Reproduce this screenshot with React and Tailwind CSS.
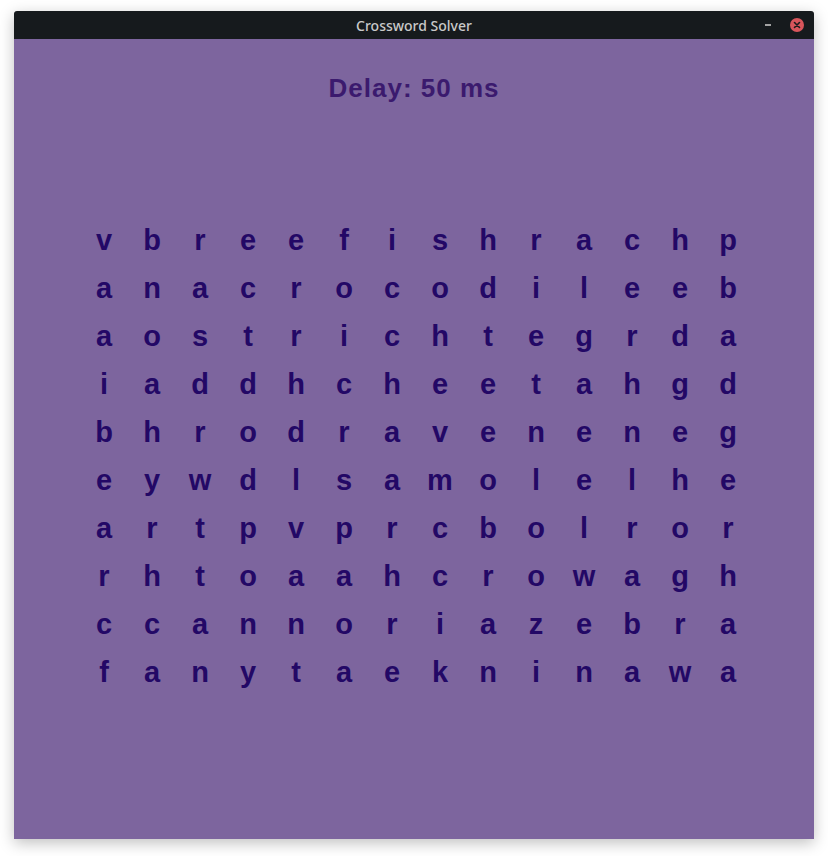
const ROWS = [
  "vbreefishrachp",
  "anacrocodileeb",
  "aostrichtegrda",
  "iaddhcheetahgd",
  "bhrodraveneneg",
  "eywdlsamolelhe",
  "artpvprcbolror",
  "rhtoaahcrowagh",
  "ccannoriazebra",
  "fanytaekninawa",
];

export default function App() {
  return (
    <div className="min-h-[856px] w-[828px] bg-white pt-[11px] pl-[14px]">
      <div className="w-[800px] shadow-[0_4px_14px_rgba(0,0,0,0.25)]">
        {/* title bar */}
        <div className="relative flex h-[28px] items-center justify-center rounded-t-[3px] bg-[#161a1d]">
          <span className="text-[14px] font-medium text-[#c9c9c9] [font-family:'Noto_Sans',sans-serif]">
            Crossword Solver
          </span>
          <div className="absolute right-[10px] top-0 flex h-[28px] items-center gap-[19px]">
            <span className="block h-[2px] w-[6px] bg-[#a3a3a3]" />
            <span className="flex h-[14px] w-[14px] items-center justify-center rounded-full bg-[#d8555b]">
              <svg width="8" height="8" viewBox="0 0 8 8">
                <path d="M1.5 1.5 L6.5 6.5 M6.5 1.5 L1.5 6.5" stroke="#1b1b1b" strokeWidth="1.6" strokeLinecap="round" />
              </svg>
            </span>
          </div>
        </div>

        {/* content */}
        <div className="h-[800px] bg-[#7d659e] [font-family:'Liberation_Sans',Arial,sans-serif]">
          <div className="pt-[33px] text-center text-[26px] font-bold leading-[32px] tracking-[1px] text-[#3b1a6e]">
            Delay: 50 ms
          </div>
          <div className="mt-[112px] pl-[66px]">
            {ROWS.map((row, r) => (
              <div key={r} className="flex">
                {row.split("").map((ch, c) => (
                  <span
                    key={c}
                    className="w-[48px] text-center text-[29px] font-bold leading-[48px] text-[#230866]"
                  >
                    {ch}
                  </span>
                ))}
              </div>
            ))}
          </div>
        </div>
      </div>
    </div>
  );
}
